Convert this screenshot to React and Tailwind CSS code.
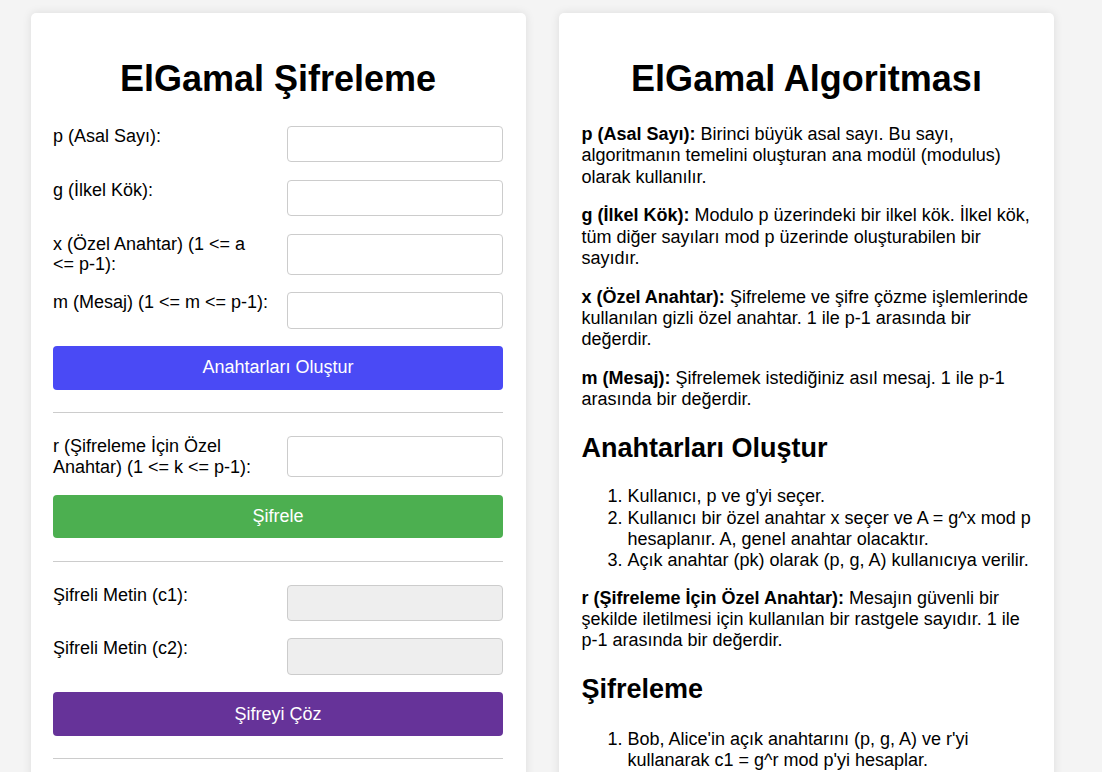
export default function App() {
  const Row = ({ label, disabled }) => (
    <div className="flex justify-between mb-[17.3px]">
      <label className="w-[48%] leading-[20.7px]">{label}</label>
      <input
        type="text"
        disabled={disabled}
        className={
          "w-[48%] min-h-[36.5px] border border-[#cccccc] rounded-[4px] outline-none " +
          (disabled ? "bg-[#eeeeee]" : "bg-white")
        }
      />
    </div>
  );
  const Btn = ({ children, color }) => (
    <button
      className={
        "w-full h-[43.7px] rounded-[4px] text-white text-[18px] leading-[20.7px] flex items-center justify-center " +
        color
      }
    >
      {children}
    </button>
  );
  const Hr = () => <div className="h-px bg-[#cccccc] mt-[22.3px] mb-[23px]" />;
  const P = ({ b, children }) => (
    <p className="leading-[21.3px] mb-[17.5px]">
      <b>{b}</b> {children}
    </p>
  );
  return (
    <div className="min-h-[772px] bg-[#f4f4f4] font-['Liberation_Sans',Arial,sans-serif] text-[18px] text-black">
      <div className="flex items-start gap-[33px] pl-[31px] pt-[13px]">
        <div className="w-[495px] shrink-0 bg-white rounded-[5px] shadow-[0_0_10px_rgba(0,0,0,0.1)] pl-[22px] pr-[23px] pt-[44.5px] pb-[22px]">
          <h1 className="text-center text-[36px] leading-[41.4px] font-bold mb-[27px]">ElGamal Şifreleme</h1>
          <Row label="p (Asal Sayı):" />
          <Row label="g (İlkel Kök):" />
          <Row label="x (Özel Anahtar) (1 <= a <= p-1):" />
          <Row label="m (Mesaj) (1 <= m <= p-1):" />
          <Btn color="bg-[#4a4af5]">Anahtarları Oluştur</Btn>
          <Hr />
          <Row label="r (Şifreleme İçin Özel Anahtar) (1 <= k <= p-1):" />
          <Btn color="bg-[#4caf50]">Şifrele</Btn>
          <Hr />
          <Row label="Şifreli Metin (c1):" disabled />
          <Row label="Şifreli Metin (c2):" disabled />
          <Btn color="bg-[#663399]">Şifreyi Çöz</Btn>
          <Hr />
          <Row label="Çözülen Mesaj:" disabled />
        </div>
        <div className="w-[495px] shrink-0 bg-white rounded-[5px] shadow-[0_0_10px_rgba(0,0,0,0.1)] pl-[22.5px] pr-[22.5px] pt-[44.5px] pb-[22px]">
          <h1 className="text-center text-[36px] leading-[41.4px] font-bold mb-[25px]">ElGamal Algoritması</h1>
          <P b="p (Asal Sayı):">
            Birinci büyük asal sayı. Bu sayı, algoritmanın temelini oluşturan ana modül (modulus) olarak kullanılır.
          </P>
          <P b="g (İlkel Kök):">
            Modulo p üzerindeki bir ilkel kök. İlkel kök, tüm diğer sayıları mod p üzerinde oluşturabilen bir sayıdır.
          </P>
          <P b="x (Özel Anahtar):">
            Şifreleme ve şifre çözme işlemlerinde kullanılan gizli özel anahtar. 1 ile p-1 arasında bir değerdir.
          </P>
          <P b="m (Mesaj):">Şifrelemek istediğiniz asıl mesaj. 1 ile p-1 arasında bir değerdir.</P>
          <h2 className="text-[27px] leading-[31px] font-bold mt-[22.4px] mb-[22.4px]">Anahtarları Oluştur</h2>
          <ol className="list-decimal pl-[46px] leading-[21.3px] mb-[16px]">
            <li>Kullanıcı, p ve g'yi seçer.</li>
            <li>Kullanıcı bir özel anahtar x seçer ve A = g^x mod p hesaplanır. A, genel anahtar olacaktır.</li>
            <li>Açık anahtar (pk) olarak (p, g, A) kullanıcıya verilir.</li>
          </ol>
          <P b="r (Şifreleme İçin Özel Anahtar):">
            Mesajın güvenli bir şekilde iletilmesi için kullanılan bir rastgele sayıdır. 1 ile p-1 arasında bir değerdir.
          </P>
          <h2 className="text-[27px] leading-[31px] font-bold mt-[22.4px] mb-[23.6px]">Şifreleme</h2>
          <ol className="list-decimal pl-[46px] leading-[21.3px] mb-[16px]">
            <li>Bob, Alice'in açık anahtarını (p, g, A) ve r'yi kullanarak c1 = g^r mod p'yi hesaplar.</li>
            <li>Bob, c2 = m * A^r mod p'yi hesaplar.</li>
            <li>Şifreli metin (c1, c2) Alice'e gönderilir.</li>
          </ol>
        </div>
      </div>
    </div>
  );
}
